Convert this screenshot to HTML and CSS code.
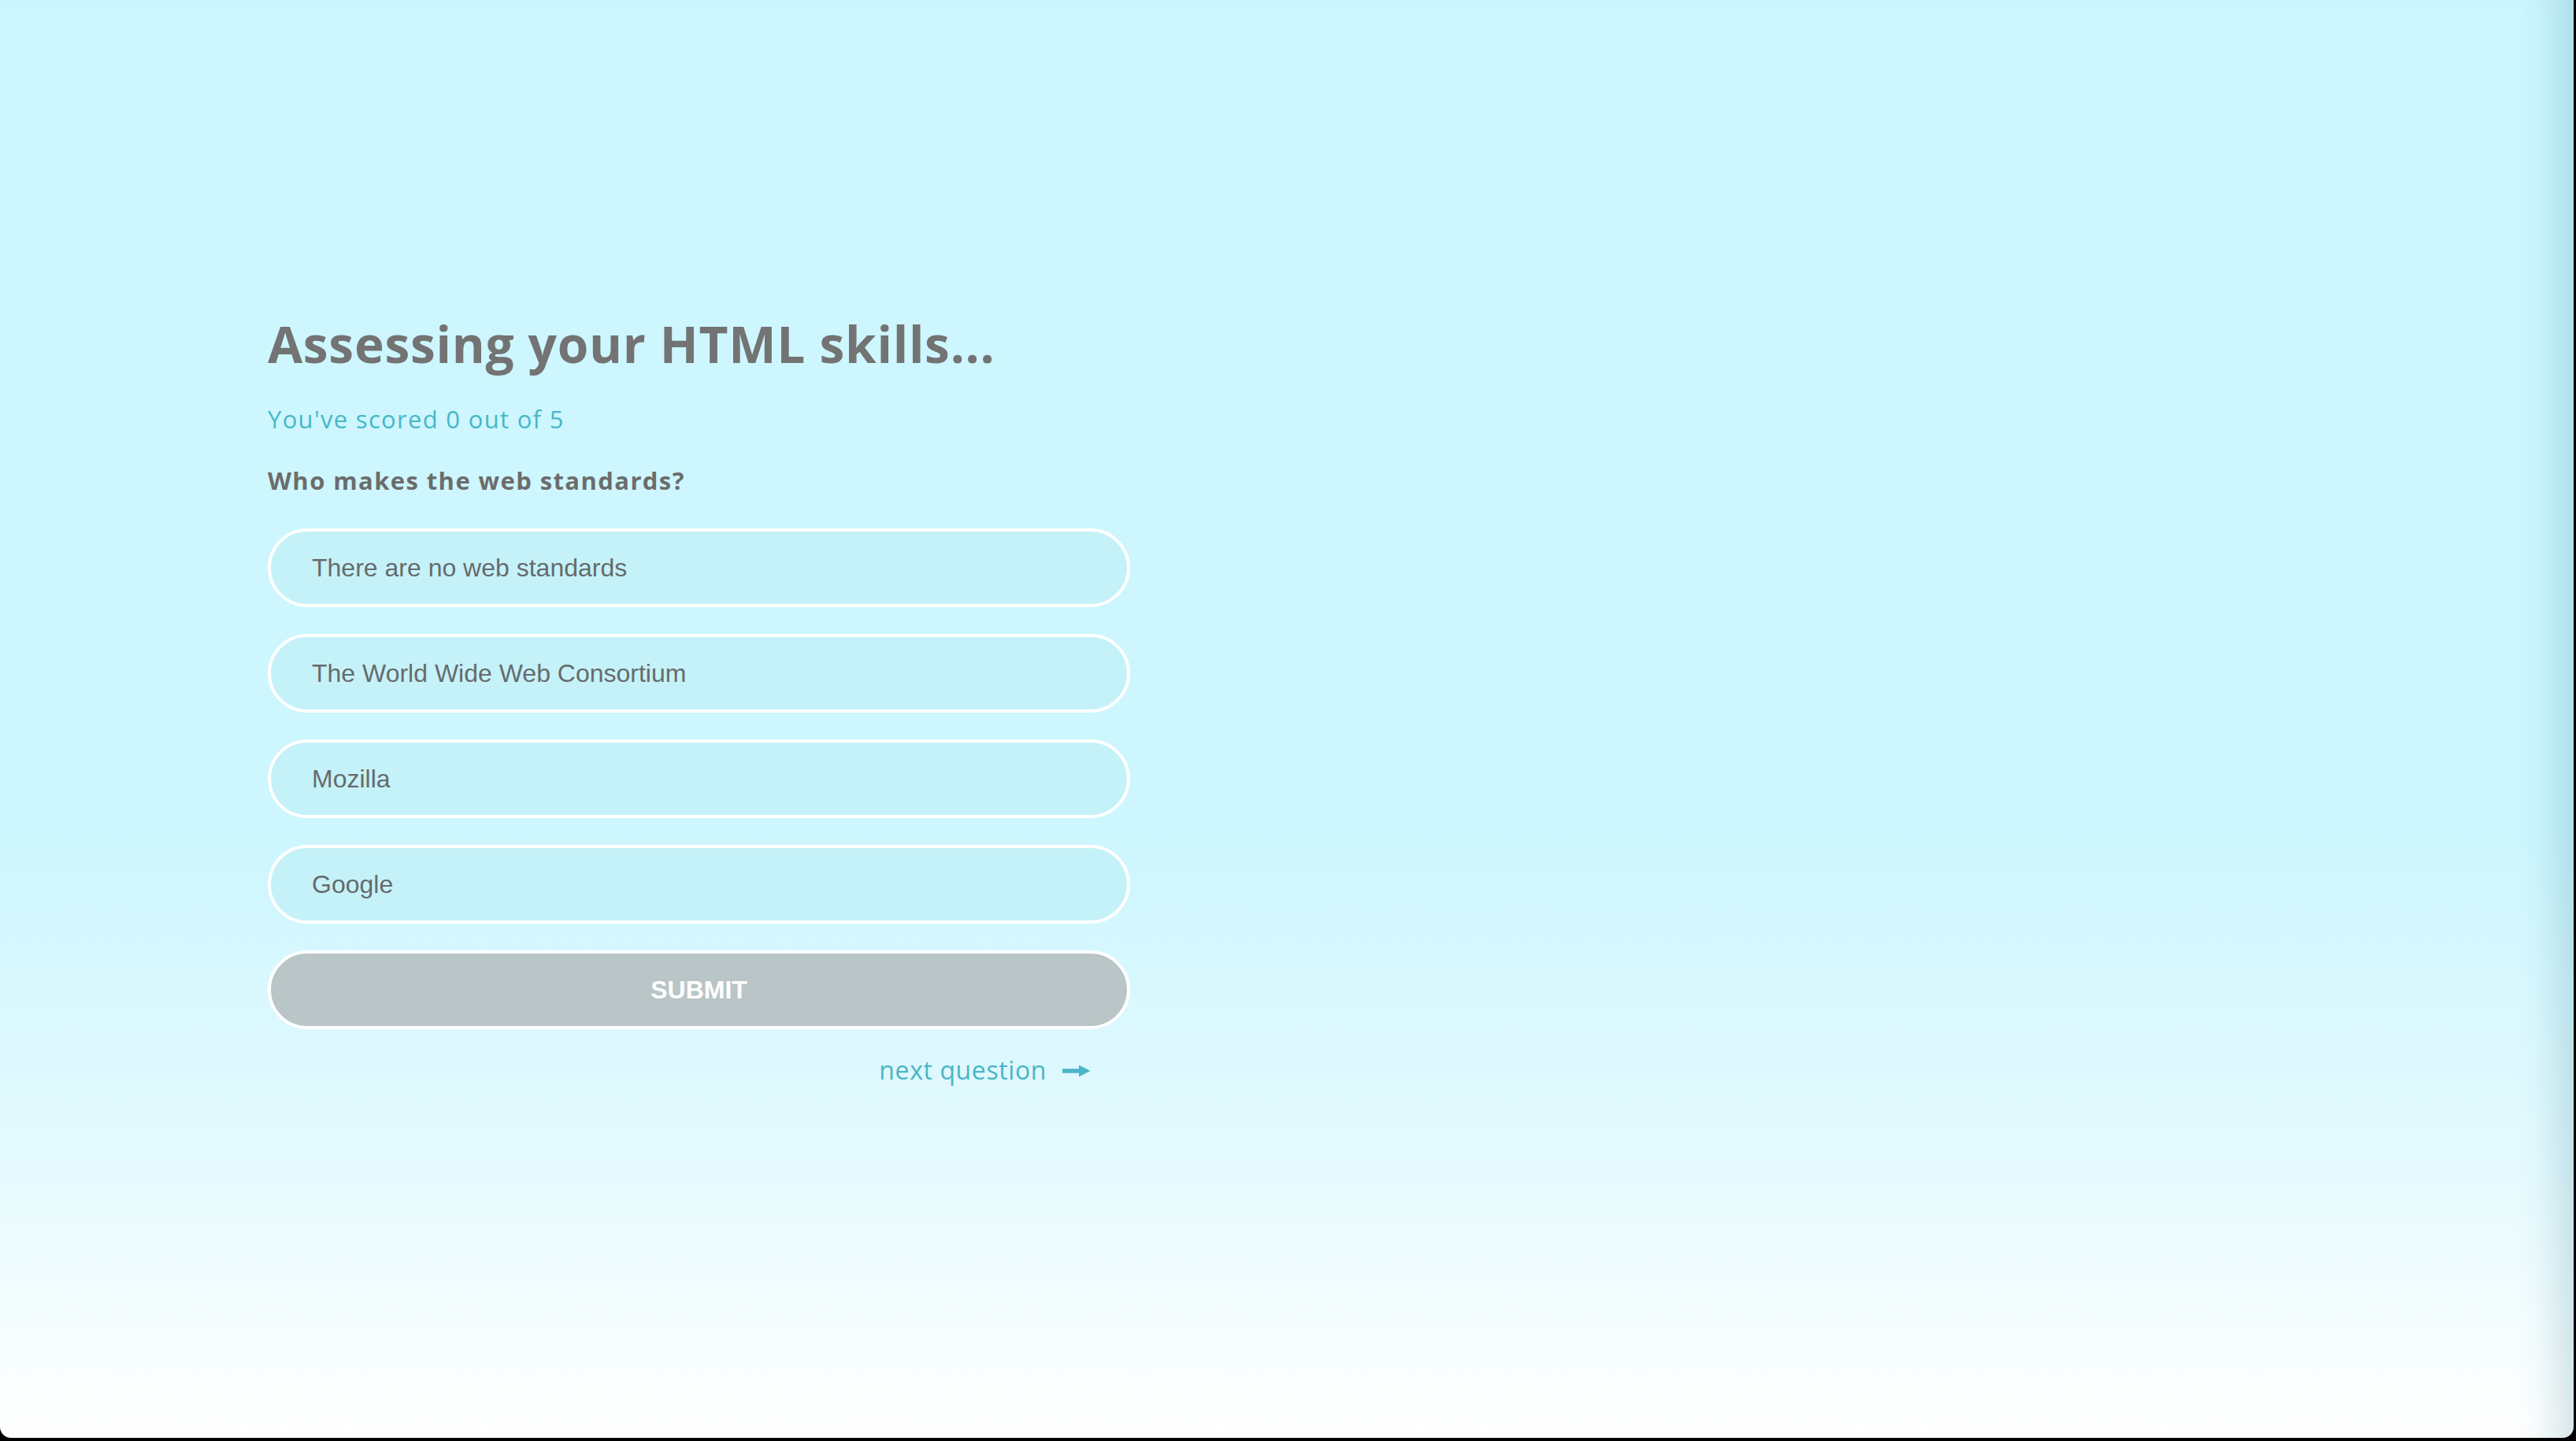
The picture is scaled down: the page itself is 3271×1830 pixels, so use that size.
FILE: index.html
```html
<!DOCTYPE html>
<html lang="en">
<head>
<meta charset="utf-8">
<title>Assessing your HTML skills</title>
<link rel="stylesheet" href="styles.css">
</head>
<body>
<div class="window">
  <main class="quiz">
    <h1 class="title">Assessing your HTML skills...</h1>
    <p class="score">You've scored 0 out of 5</p>
    <h2 class="question">Who makes the web standards?</h2>
    <div class="options">
      <div class="option">There are no web standards</div>
      <div class="option">The World Wide Web Consortium</div>
      <div class="option">Mozilla</div>
      <div class="option">Google</div>
      <div class="submit">SUBMIT</div>
    </div>
    <div class="next-row">
      <span class="next">next question</span>
      <svg class="arrow" width="36" height="20" viewBox="0 0 36 20"><path d="M0 10 H24" stroke="#4db5c8" stroke-width="5.5" fill="none"/><path d="M21 2.5 L35.5 10 L21 17.5 Z" fill="#4db5c8"/></svg>
    </div>
  </main>
</div>
</body>
</html>
```
FILE: styles.css
```css
html, body {
  margin: 0;
  padding: 0;
  background: #000;
  width: 3271px;
  height: 1830px;
  overflow: hidden;
}
.window {
  width: 3268px;
  height: 1826px;
  border-radius: 0 0 14px 14px;
  background: linear-gradient(to bottom, #cdf6fe 0%, #cdf6fe 58%, #e4fafe 80%, #ffffff 100%);
  box-shadow: inset -60px 0 50px -40px rgba(40, 120, 140, 0.22);
  overflow: hidden;
  box-sizing: border-box;
  padding-top: 392px;
  padding-left: 340px;
}
.quiz {
  width: 1095px;
  font-family: "Open Sans", "Liberation Sans", sans-serif;
}
.title {
  margin: 0;
  font-size: 64px;
  line-height: 90px;
  font-weight: 700;
  color: #737373;
  letter-spacing: 0.7px;
}
.score {
  margin: 28px 0 0;
  font-size: 31px;
  line-height: 44px;
  color: #46b8c9;
  letter-spacing: 1.3px;
}
.question {
  margin: 34px 0 0;
  font-size: 31px;
  line-height: 44px;
  font-weight: 700;
  color: #6c6c6c;
  letter-spacing: 1.4px;
}
.options {
  margin-top: 39px;
  display: flex;
  flex-direction: column;
  gap: 34px;
}
.option, .submit {
  height: 100px;
  box-sizing: border-box;
  border: 4px solid #ffffff;
  border-radius: 50px;
  display: flex;
  align-items: center;
  font-family: "Liberation Sans", Arial, sans-serif;
  font-size: 32px;
}
.option {
  background: #c5f2f9;
  color: #666b6c;
  padding-left: 52px;
}
.submit {
  background: #b9c5c6;
  color: #ffffff;
  font-weight: 700;
  justify-content: center;
}
.next-row {
  margin-top: 30px;
  display: flex;
  justify-content: flex-end;
  align-items: center;
  gap: 20px;
  padding-right: 50px;
}
.next {
  font-size: 32px;
  line-height: 44px;
  color: #4ab5c7;
  letter-spacing: 0.6px;
}
.arrow {
  display: block;
  margin-top: 2px;
}
```
